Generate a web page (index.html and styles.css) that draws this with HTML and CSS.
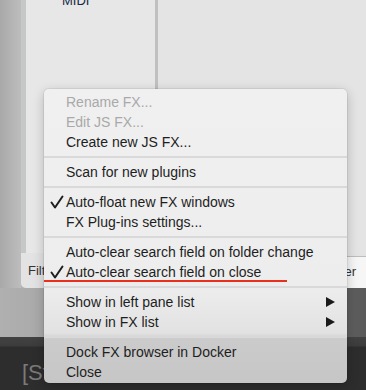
FILE: index.html
```html
<!DOCTYPE html>
<html lang="en">
<head>
  <meta charset="UTF-8" />
  <meta name="viewport" content="width=device-width, initial-scale=1.0" />
  <title>FX Browser menu</title>
  <link rel="stylesheet" href="styles.css">
</head>
<body>
  <div class="screen">
    <div class="upper">
      <div class="gutter"></div>
      <div class="window">
        <div class="panes">
          <div class="pane pane-left">
            <div class="tree-item">MIDI</div>
          </div>
          <div class="divider"></div>
          <div class="pane pane-right"></div>
        </div>
        <div class="filterbar">
          <span class="filter-label">Filter</span>
          <div class="filter-field">Filter</div>
        </div>
      </div>
    </div>
    <div class="shelf"></div>
    <div class="dock"><span class="dock-text">[Stopped]</span></div>

    <div class="menu">
      <div class="item disabled"><span class="mark"></span>Rename FX...</div>
      <div class="item disabled"><span class="mark"></span>Edit JS FX...</div>
      <div class="item"><span class="mark"></span>Create new JS FX...</div>
      <div class="sep"></div>
      <div class="item"><span class="mark"></span>Scan for new plugins</div>
      <div class="sep"></div>
      <div class="item"><span class="mark"><svg width="14" height="14" viewBox="0 0 14 14"><path d="M1.5 7.5 L5 12.5 L12.5 1.5" /></svg></span>Auto-float new FX windows</div>
      <div class="item"><span class="mark"></span>FX Plug-ins settings...</div>
      <div class="sep"></div>
      <div class="item"><span class="mark"></span>Auto-clear search field on folder change</div>
      <div class="item marked"><span class="mark"><svg width="14" height="14" viewBox="0 0 14 14"><path d="M1.5 7.5 L5 12.5 L12.5 1.5" /></svg></span>Auto-clear search field on close</div>
      <div class="sep"></div>
      <div class="item"><span class="mark"></span>Show in left pane list<svg class="arrow" width="9" height="10" viewBox="0 0 9 10"><polygon points="0,0 9,5 0,10" /></svg></div>
      <div class="item"><span class="mark"></span>Show in FX list<svg class="arrow" width="9" height="10" viewBox="0 0 9 10"><polygon points="0,0 9,5 0,10" /></svg></div>
      <div class="sep"></div>
      <div class="item"><span class="mark"></span>Dock FX browser in Docker</div>
      <div class="item"><span class="mark"></span>Close</div>
    </div>
  </div>
</body>
</html>
```

FILE: styles.css
```css
body {
  margin: 0;
  font-family: 'Liberation Sans', Arial, sans-serif;
  background: #2d2d2d;
}
.screen {
  position: relative;
  width: 366px;
  height: 390px;
  overflow: hidden;
}
.upper {
  display: flex;
  height: 288px;
  background: #b4b4b4;
}
.gutter {
  width: 21px;
  background: linear-gradient(to right, #a9a9a9, #bdbdbd);
}
.window {
  flex: 1;
  display: flex;
  flex-direction: column;
  background: #c6c7c7;
  border-bottom-left-radius: 5px;
  overflow: hidden;
}
.panes {
  flex: 1;
  display: flex;
  padding-left: 5px;
}
.pane-left {
  width: 129px;
  background: #e6e7e6;
}
.divider {
  width: 3px;
  background: #bfc1c1;
}
.pane-right {
  flex: 1;
  background: #e3e4e3;
}
.tree-item {
  margin-top: -7px;
  padding-left: 36px;
  font-size: 13px;
  line-height: 16px;
  color: #1c2748;
}
.filterbar {
  height: 35px;
  display: flex;
  align-items: center;
  background: #e3e3e3;
  padding-left: 7px;
}
.filter-label {
  font-size: 13px;
  color: #333;
}
.filter-field {
  margin-left: auto;
  align-self: stretch;
  margin-top: 3px;
  width: 140px;
  box-sizing: border-box;
  background: #f6f6f6;
  border-top: 1px solid #bdbdbd;
  padding-right: 10px;
  text-align: right;
  font-size: 13px;
  line-height: 30px;
  color: #333;
}
.shelf {
  height: 49px;
  background: linear-gradient(to right, #b0b0b0, #a2a2a2 25%, #7c7c7c 60%, #5a5a5a);
}
.dock {
  height: 53px;
  box-sizing: border-box;
  background: linear-gradient(#424242 0, #3c3c3c 9px, #2d2d2d 10px);
  padding: 24px 0 0 22px;
}
.dock-text {
  display: inline-block;
  width: 22px;
  overflow: hidden;
  white-space: nowrap;
  vertical-align: top;
  font-size: 22px;
  line-height: 24px;
  color: #7a7a7a;
}

.menu {
  position: absolute;
  left: 44px;
  top: 89px;
  width: 303px;
  box-sizing: border-box;
  padding: 3px 0 1px;
  border-radius: 5px;
  background: linear-gradient(#f0f0f0 0, #ededed 198px, #e2e2e2 244px, #cbcbcb 250px, #c6c6c6 100%);
  box-shadow: 0 0 0 1px rgba(0, 0, 0, 0.06), 0 3px 12px rgba(0, 0, 0, 0.22);
  font-size: 14px;
  color: #1e1e1e;
}
.item {
  position: relative;
  display: flex;
  align-items: center;
  height: 20px;
  line-height: 20px;
  white-space: nowrap;
}
.item.disabled {
  color: #a9a9a9;
}
.mark {
  display: flex;
  align-items: center;
  width: 16px;
  padding-left: 6px;
  height: 20px;
}
.mark svg {
  fill: none;
  stroke: #1e1e1e;
  stroke-width: 2;
  stroke-linecap: round;
  stroke-linejoin: round;
}
.arrow {
  margin-left: auto;
  margin-right: 12px;
  fill: #1a1a1a;
}
.sep {
  height: 2px;
  margin: 4px 0;
  background: #d9d9d9;
}
.item.marked::after {
  content: "";
  position: absolute;
  left: 0;
  bottom: 0;
  width: 243px;
  height: 2px;
  background: #e8301c;
}
```
